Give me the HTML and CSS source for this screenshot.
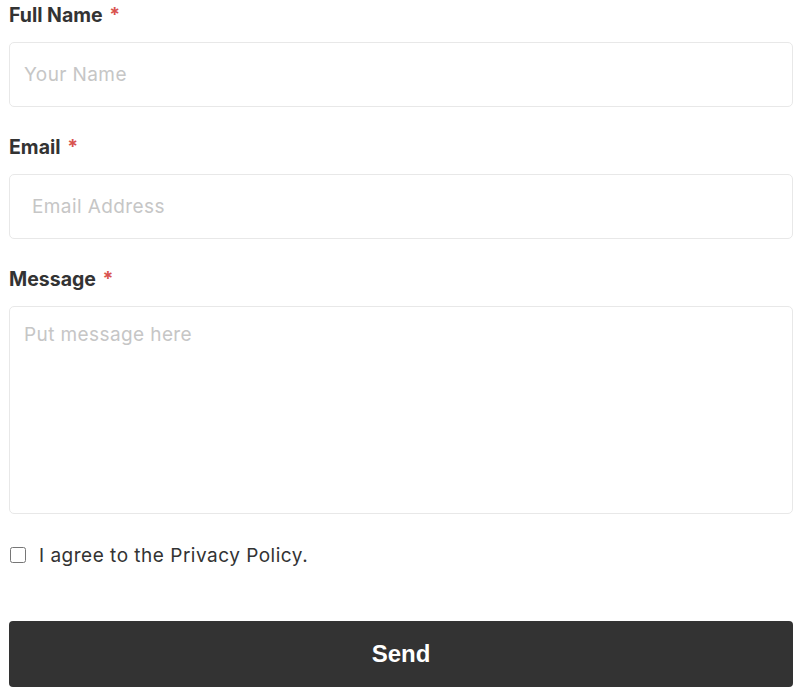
FILE: index.html
```html
<!DOCTYPE html>
<html>
<head>
    <meta charset="UTF-8">
    <meta name="viewport" content="width=device-width, initial-scale=1.0">
    <title>Contact</title>
    <link rel="stylesheet" href="styles.css">
</head>
<body>
    <form class="contact-form">
        <div class="form-group">
            <label for="full-name">Full Name <span class="required">*</span></label>
            <input type="text" id="full-name" class="field" placeholder="Your Name">
        </div>

        <div class="form-group">
            <label for="email">Email <span class="required">*</span></label>
            <input type="email" id="email" class="field field-email" placeholder="Email Address">
        </div>

        <div class="form-group">
            <label for="message">Message <span class="required">*</span></label>
            <textarea id="message" class="field field-message" placeholder="Put message here"></textarea>
        </div>

        <div class="agree">
            <input type="checkbox" id="agree">
            <label for="agree">I agree to the Privacy Policy.</label>
        </div>

        <button type="submit" class="btn">Send</button>
    </form>
</body>
</html>
```

FILE: styles.css
```css
body {
    font-family: Inter, 'Noto Sans', sans-serif;
    background: #fff;
    color: #333;
    margin: 0;
}

.contact-form {
    padding: 1px 7px 0 9px;
}

.form-group {
    margin-bottom: 26px;
}

.form-group label {
    display: block;
    font-size: 19.5px;
    line-height: 29px;
    font-weight: 700;
    color: #333;
    margin-bottom: 12px;
}

.required {
    color: #d9534f;
    margin-left: 2px;
}

.field {
    display: block;
    box-sizing: border-box;
    width: 100%;
    height: 65px;
    padding: 0 14px;
    border: 1px solid #e8e8e8;
    border-radius: 5px;
    font-family: Inter, 'Noto Sans', sans-serif;
    font-size: 19px;
    letter-spacing: 0.4px;
    color: #333;
    background: #fff;
    outline: none;
}

.field::placeholder {
    color: #c6c6c6;
}

.field-email {
    padding-left: 22px;
}

.field-message {
    height: 208px;
    padding: 16px 14px;
    resize: none;
}

.agree {
    display: flex;
    align-items: center;
    gap: 13px;
    margin-top: 6px;
    height: 30px;
}

.agree input {
    width: 16px;
    height: 16px;
    margin: 0 0 0 1px;
}

.agree label {
    font-size: 19px;
    letter-spacing: 0.5px;
    color: #333;
}

.btn {
    display: block;
    width: 100%;
    height: 66px;
    margin-top: 51px;
    background: #333;
    color: #fff;
    border: none;
    border-radius: 4px;
    font-family: 'Liberation Sans', Arial, sans-serif;
    font-size: 24px;
    font-weight: 700;
    cursor: pointer;
}
```
